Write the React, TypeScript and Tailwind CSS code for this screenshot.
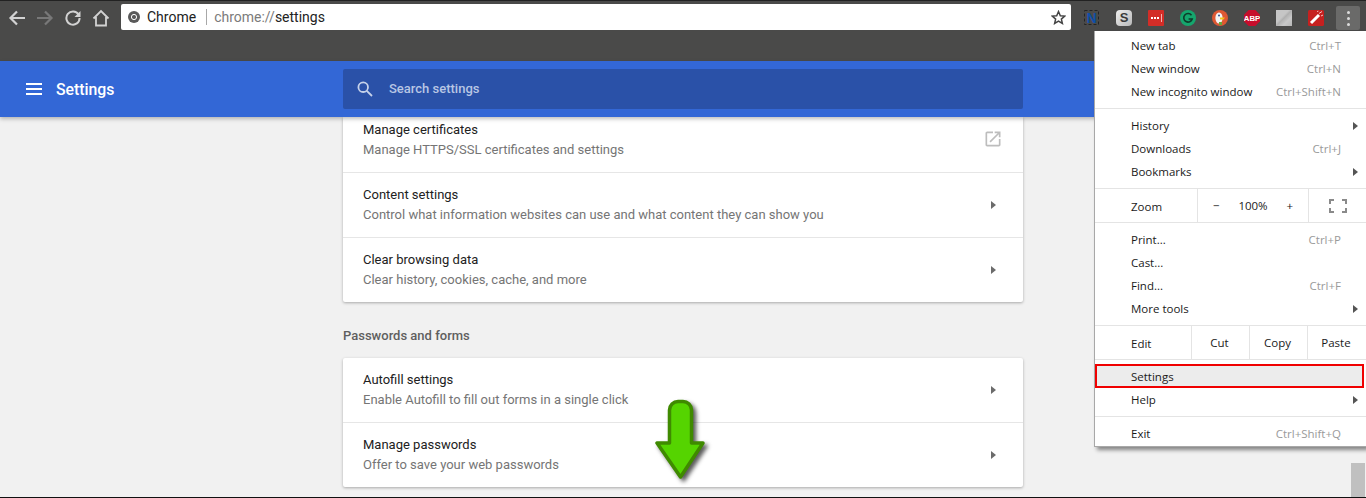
import React from "react";

const ToolbarIcons = () => (
	<div className="flex items-center h-[36px]">
		{/* N */}
		<div className="w-[32px] flex justify-center">
			<svg width="18" height="18" viewBox="0 0 18 18">
				<rect x="1.5" y="1.5" width="14" height="14" fill="none" stroke="#242424" strokeDasharray="3 2" />
				<text x="8.5" y="14" textAnchor="middle" fontFamily="Liberation Sans" fontWeight="700" fontSize="14" fill="#0f4fa8">N</text>
			</svg>
		</div>
		{/* S */}
		<div className="w-[32px] flex justify-center">
			<div className="w-[16px] h-[16px] rounded-[4px] bg-[linear-gradient(135deg,#eeeeee,#b8b8b8)] flex items-center justify-center font-['Liberation_Sans',sans-serif] text-[13px] font-bold text-[#3a3a3a]">S</div>
		</div>
		{/* lastpass */}
		<div className="w-[32px] flex justify-center">
			<div className="w-[16px] h-[16px] rounded-[1px] bg-[#d32d27] flex items-center justify-center gap-[1px]">
				<span className="w-[2px] h-[2px] bg-white" />
				<span className="w-[2px] h-[2px] bg-white" />
				<span className="w-[2px] h-[2px] bg-white" />
				<span className="w-[1px] h-[8px] bg-[#f0b0b0] ml-[1px]" />
			</div>
		</div>
		{/* grammarly */}
		<div className="w-[32px] flex justify-center">
			<svg width="16" height="16" viewBox="0 0 16 16">
				<circle cx="8" cy="8" r="8" fill="#15a66d" />
				<path d="M11.5 5.2A4.3 4.3 0 1 0 12.2 9H8.6" fill="none" stroke="#0d3b2a" strokeWidth="1.6" />
			</svg>
		</div>
		{/* duckduckgo */}
		<div className="w-[32px] flex justify-center">
			<svg width="16" height="16" viewBox="0 0 16 16">
				<circle cx="8" cy="8" r="8" fill="#de5833" />
				<ellipse cx="7" cy="8" rx="3.6" ry="5.6" fill="#f4f4f4" />
				<path d="M8 7.5h5l-1.5 2H8z" fill="#f2c21a" />
				<circle cx="7" cy="5.5" r="1" fill="#2d4f8e" />
				<path d="M7 12h3v3H7z" fill="#67a83b" />
			</svg>
		</div>
		{/* abp */}
		<div className="w-[32px] flex justify-center">
			<svg width="16" height="16" viewBox="0 0 16 16">
				<polygon points="4.7,0 11.3,0 16,4.7 16,11.3 11.3,16 4.7,16 0,11.3 0,4.7" fill="#c70d2c" />
				<text x="8" y="11" textAnchor="middle" fontFamily="Liberation Sans" fontWeight="700" fontSize="7.8" fill="#fff">ABP</text>
			</svg>
		</div>
		{/* grey square */}
		<div className="w-[32px] flex justify-center">
			<div className="w-[16px] h-[16px] bg-[linear-gradient(135deg,#c6c6c6_0%,#c6c6c6_40%,#b0b0b0_50%,#c8c8c8_70%,#b6b6b6_100%)]" />
		</div>
		{/* wand */}
		<div className="w-[32px] flex justify-center">
			<svg width="16" height="16" viewBox="0 0 16 16">
				<rect width="16" height="16" rx="1.5" fill="#c6201f" />
				<path d="M3 13 11 5" stroke="#fff" strokeWidth="3" />
				<path d="M11 3.5 14 1.5M13 6l2-1M9.5 2 10 .8" stroke="#f4c9c9" strokeWidth="1" />
			</svg>
		</div>
		{/* kebab */}
		<div className="ml-[4px] mr-[6px] w-[24px] h-[24px] rounded-[2px] bg-[#6a6a69] flex flex-col items-center justify-center gap-[3px]">
			<span className="w-[3px] h-[3px] rounded-full bg-[#dcdcdc]" />
			<span className="w-[3px] h-[3px] rounded-full bg-[#dcdcdc]" />
			<span className="w-[3px] h-[3px] rounded-full bg-[#dcdcdc]" />
		</div>
	</div>
);

const Row = ({ title, sub, last }: { title: string; sub: string; last?: boolean }) => (
	<div className={`flex items-center justify-between pl-[20px] pr-[27px] ${last ? "h-[64px]" : "h-[65px] border-b border-[#e6e6e6]"}`}>
		<div className="flex flex-col gap-[4px]">
			<div className="text-[13px] leading-[16px] text-[#212121]">{title}</div>
			<div className="text-[13px] leading-[16px] text-[#757575]">{sub}</div>
		</div>
		<div className="w-0 h-0 border-y-[4px] border-y-transparent border-l-[5px] border-l-[#6b6b6b]" />
	</div>
);

const Item = ({ label, hint, arrow }: { label: string; hint?: string; arrow?: boolean }) => (
	<div className="h-[23px] flex items-center justify-between pl-[36px] pr-[8px]">
		<span className="text-[#1a1a1a]">{label}</span>
		{hint && <span className="text-[#9a9a9a] mr-[17px]">{hint}</span>}
		{arrow && <span className="w-0 h-0 border-y-[4px] border-y-transparent border-l-[5px] border-l-[#555]" />}
	</div>
);

const Sep = () => <div className="h-px bg-[#e4e4e4] my-[5px]" />;

const ChromeMenu = () => (
	<div className="absolute z-20 left-[1094px] top-[31px] w-[272px] h-[416px] bg-white border-l border-b border-[#a8a8a8] shadow-[3px_3px_4px_rgba(0,0,0,0.45)] pt-[3px] font-['Open_Sans',sans-serif] text-[11.5px]">
		<Item label="New tab" hint="Ctrl+T" />
		<Item label="New window" hint="Ctrl+N" />
		<Item label="New incognito window" hint="Ctrl+Shift+N" />
		<Sep />
		<Item label="History" arrow />
		<Item label="Downloads" hint="Ctrl+J" />
		<Item label="Bookmarks" arrow />
		<div className="h-px bg-[#e4e4e4] mt-[5px]" />
		<div className="h-[33px] flex items-center text-[#1a1a1a]">
			<div className="w-[102px] h-full flex items-center pl-[36px] pt-[2px]">Zoom</div>
			<div className="w-[112px] h-full flex items-center justify-between border-x border-[#e4e4e4] pl-[15px] pr-[15px]">
				<span>−</span>
				<span>100%</span>
				<span>+</span>
			</div>
			<div className="flex-1 flex justify-center">
				<svg width="18" height="14" viewBox="0 0 18 14" fill="none" stroke="#8a8a8a" strokeWidth="2">
					<path d="M1 5V1h4M13 1h4v4M17 9v4h-4M5 13H1V9" />
				</svg>
			</div>
		</div>
		<div className="h-px bg-[#e4e4e4] mb-[5px]" />
		<Item label="Print..." hint="Ctrl+P" />
		<Item label="Cast..." />
		<Item label="Find..." hint="Ctrl+F" />
		<Item label="More tools" arrow />
		<div className="h-px bg-[#e4e4e4] mt-[5px]" />
		<div className="h-[33px] flex items-center text-[#1a1a1a]">
			<div className="w-[96px] h-full flex items-center pl-[36px] pt-[2px]">Edit</div>
			<div className="w-[58px] h-full flex items-center justify-center border-l border-[#e4e4e4] pr-[2px]">Cut</div>
			<div className="w-[58px] h-full flex items-center justify-center border-l border-[#e4e4e4] pr-[2px]">Copy</div>
			<div className="flex-1 h-full flex items-center justify-center border-l border-[#e4e4e4] pr-[2px]">Paste</div>
		</div>
		<div className="h-px bg-[#e4e4e4] mb-[4px]" />
		<div className="h-[24px] flex items-center pl-[34px] pt-[2px] bg-[#ececec] border-2 border-[#f00000] text-[#1a1a1a] mr-[2px]">Settings</div>
		<Item label="Help" arrow />
		<Sep />
		<Item label="Exit" hint="Ctrl+Shift+Q" />
	</div>
);

const GreenArrow = () => (
	<svg className="absolute left-[650px] top-[396px] drop-shadow-[3px_3px_2px_rgba(0,0,0,0.65)]" width="64" height="92" viewBox="0 0 64 92">
		<path d="M19.5 14a8.5 8.5 0 0 1 8.5-8.5h5a8.5 8.5 0 0 1 8.5 8.5v33H53L30.5 81 7 47h12.5z" fill="#55d400" stroke="#3f8a00" strokeWidth="3.5" strokeLinejoin="round" />
	</svg>
);

const App = () => {
	return (
		<div className="relative w-[1366px] h-[498px] overflow-hidden bg-[#f1f1f1] font-['Roboto',sans-serif] border-b border-[#111]">
			{/* browser toolbar */}
			<div className="h-[61px] bg-[#4a4a49] border-t border-[#222] flex items-start">
				<div className="flex items-center h-[33px] pl-[8px]">
					<svg width="18" height="18" viewBox="0 0 18 18" fill="none" stroke="#d2d2d2" strokeWidth="2.2">
						<path d="M17 9H3M9 2.5 2.5 9 9 15.5" />
					</svg>
					<svg className="ml-[10px]" width="18" height="18" viewBox="0 0 18 18" fill="none" stroke="#787878" strokeWidth="2.2">
						<path d="M1 9h14M9 2.5 15.5 9 9 15.5" />
					</svg>
					<svg className="ml-[11px]" width="16" height="16" viewBox="0 0 16 16" fill="none">
						<path d="M13.6 4.6A6.6 6.6 0 1 0 14.6 8" stroke="#d2d2d2" strokeWidth="2" />
						<path d="M15.5 1v6h-6z" fill="#d2d2d2" />
					</svg>
					<svg className="ml-[11px]" width="18" height="18" viewBox="0 0 18 18" fill="none" stroke="#d2d2d2" strokeWidth="1.8">
						<path d="M1.5 9.5 9 2l7.5 7.5M4 8v8.5h10V8" />
					</svg>
				</div>
				<div className="ml-[11px] mt-[3px] w-[950px] h-[26px] bg-white rounded-[2px] flex items-center pl-[7px] pr-[5px] text-[14px]">
					<svg width="12" height="12" viewBox="0 0 12 12">
						<circle cx="6" cy="6" r="6" fill="#5a5a5a" />
						<circle cx="6" cy="6" r="2.6" fill="#5a5a5a" stroke="#fff" strokeWidth="1" />
					</svg>
					<span className="ml-[7px] text-[#222]">Chrome</span>
					<span className="ml-[10px] w-px h-[16px] bg-[#a8a8a8]" />
					<span className="ml-[7px] text-[#7b7b7b]">
						chrome://<span className="text-[#222]">settings</span>
					</span>
					<svg className="ml-auto" width="15" height="15" viewBox="0 0 24 24" fill="none" stroke="#444" strokeWidth="2.4">
						<path d="m12 2.5 2.9 6.6 7.1.7-5.4 4.7 1.6 7-6.2-3.7-6.2 3.7 1.6-7L2 9.8l7.1-.7z" />
					</svg>
				</div>
				<div className="ml-auto -mt-[1px]">
					<ToolbarIcons />
				</div>
			</div>

			{/* settings header */}
			<div className="h-[56px] bg-[#3367d6] flex items-center relative z-10 shadow-[0_2px_4px_rgba(0,0,0,0.25)]">
				<div className="w-[343px] flex items-center pl-[26px] text-white">
					<div className="w-[16px] flex flex-col gap-[3px]">
						<span className="h-[2px] bg-white" />
						<span className="h-[2px] bg-white" />
						<span className="h-[2px] bg-white" />
					</div>
					<span className="ml-[14px] pt-[2px] text-[15.8px] leading-[20px] font-medium">Settings</span>
				</div>
				<div className="w-[680px] h-[40px] bg-[#2a51a8] rounded-[2px] flex items-center pl-[14px] text-[#b8c6e4] text-[13px]">
					<svg width="16" height="16" viewBox="0 0 16 16" fill="none" stroke="#c6d2ea" strokeWidth="1.8">
						<circle cx="6.2" cy="6.2" r="4.8" />
						<path d="m9.8 9.8 5.2 5.2" />
					</svg>
					<span className="ml-[16px] font-medium">Search settings</span>
				</div>
			</div>

			{/* page content */}
			<div className="w-[680px] ml-[343px]">
				<div className="bg-white shadow-[0_1px_3px_rgba(0,0,0,0.3)] rounded-b-[2px]">
					<div className="h-[56px] flex items-start justify-between pl-[20px] pr-[20px] border-b border-[#e6e6e6]">
						<div className="flex flex-col gap-[4px] pt-[5px]">
							<div className="text-[13px] leading-[16px] text-[#212121]">Manage certificates</div>
							<div className="text-[13px] leading-[16px] text-[#757575]">Manage HTTPS/SSL certificates and settings</div>
						</div>
						<svg className="mt-[12px]" width="20" height="20" viewBox="0 0 24 24" fill="#bdbdbd">
							<path d="M19 19H5V5h7V3H5c-1.11 0-2 .9-2 2v14c0 1.1.89 2 2 2h14c1.1 0 2-.9 2-2v-7h-2v7zM14 3v2h3.59l-9.83 9.83 1.41 1.41L19 6.41V10h2V3h-7z" />
						</svg>
					</div>
					<Row title="Content settings" sub="Control what information websites can use and what content they can show you" />
					<Row title="Clear browsing data" sub="Clear history, cookies, cache, and more" last />
				</div>
				<div className="mt-[26px] h-[16px] leading-[16px] text-[13px] font-medium text-[#5f5f5f]">Passwords and forms</div>
				<div className="mt-[14px] bg-white shadow-[0_1px_3px_rgba(0,0,0,0.3)] rounded-[2px]">
					<Row title="Autofill settings" sub="Enable Autofill to fill out forms in a single click" />
					<Row title="Manage passwords" sub="Offer to save your web passwords" last />
				</div>
			</div>

			<GreenArrow />
			<div className="absolute right-[1px] bottom-0 w-[14px] h-[34px] bg-[#c0c0c0]" />
			<ChromeMenu />
		</div>
	);
};

export default App;
